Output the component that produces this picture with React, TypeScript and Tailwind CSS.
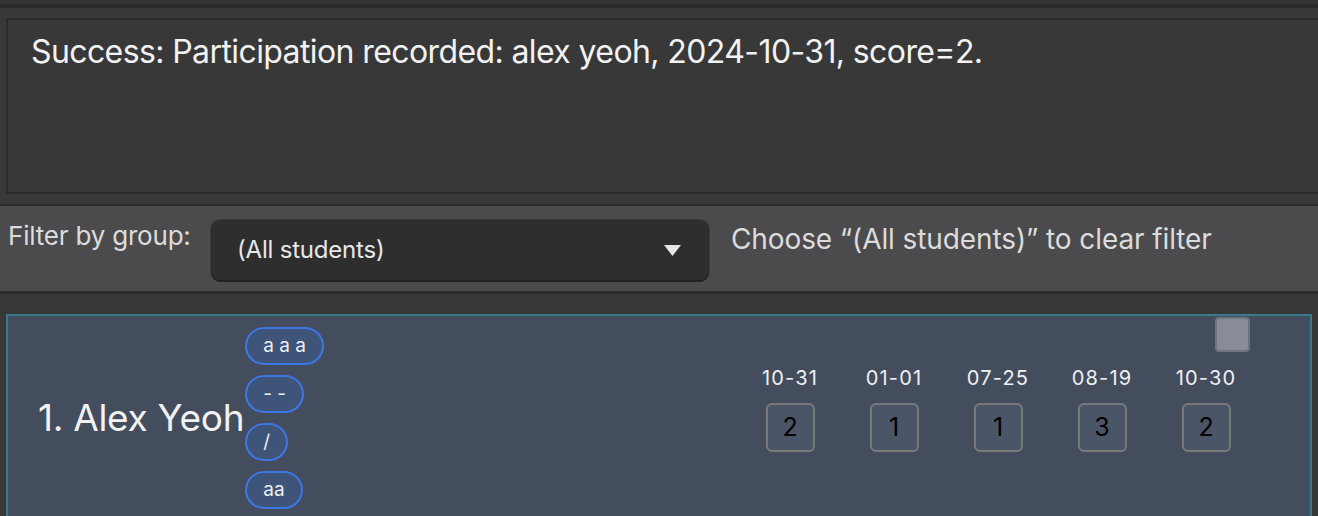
const dates = [
  { d: "10-31", s: 2 },
  { d: "01-01", s: 1 },
  { d: "07-25", s: 1 },
  { d: "08-19", s: 3 },
  { d: "10-30", s: 2 },
];

const tags = ["a a a", "- -", "/", "aa"];

export default function App() {
  return (
    <div className="w-[1318px] h-[516px] overflow-hidden bg-[#383838] font-['Inter',sans-serif]">
      {/* result display */}
      <div className="h-[4px] bg-[#353535]" />
      <div className="h-[4px] bg-[#2b2b2b]" />
      <div className="pt-[10px] pl-[6px] pb-[10px]">
        <div className="h-[176px] border-2 border-r-0 border-[#2b2b2b] bg-[#383838] px-[23px] pt-[12px]">
          <p className="text-[32px] leading-[40px] text-[#f2f2f2] tracking-[-0.6px] whitespace-nowrap">
            Success: Participation recorded: alex yeoh, 2024-10-31, score=2.
          </p>
        </div>
      </div>

      {/* filter bar */}
      <div className="h-[2px] bg-[#2b2b2b]" />
      <div className="h-[85px] bg-[#4b4b4d] flex items-start">
        <span className="pl-[8px] pt-[14px] w-[211px] text-[26px] leading-[32px] text-[#dcdcdc] tracking-[-0.2px] whitespace-nowrap">
          Filter by group:
        </span>
        <div className="mt-[14px] w-[498px] h-[60px] rounded-[9px] bg-[#2e2e2e] shadow-[0_2px_0_#232323,0_0_0_1px_#3a3a3a] flex items-center justify-between pl-[26px] pr-[28px]">
          <span className="text-[24px] leading-[30px] text-[#e8e8e8] tracking-[-0.2px]">(All students)</span>
          <svg width="17" height="11" viewBox="0 0 17 11">
            <polygon points="0,0 17,0 8.5,11" fill="#e6e6e6" />
          </svg>
        </div>
        <span className="pl-[22px] pt-[15px] text-[28px] leading-[36px] text-[#dcdcdc] tracking-[-0.1px] whitespace-nowrap">
          Choose “(All students)” to clear filter
        </span>
      </div>
      <div className="h-[3px] bg-[#2b2b2b]" />

      {/* student list */}
      <div className="pt-[20px] pl-[6px] pr-[6px]">
        <div className="h-[220px] border-2 border-[#3b7a8c] bg-[#434d5e] flex">
          <div className="pl-[30px] pt-[80px] text-[37px] leading-[44px] text-[#f2f2f2] tracking-[-0.3px] whitespace-nowrap">
            1. Alex Yeoh
          </div>
          <div className="ml-[1px] pt-[11px] flex flex-col items-start gap-[10px]">
            {tags.map((t) => (
              <span
                key={t}
                className="h-[38px] min-w-[42px] rounded-full border-2 border-[#3b78e6] bg-[#3e5478] px-[16px] flex items-center justify-center text-[19px] text-[#f0f0f0]"
              >
                {t}
              </span>
            ))}
          </div>
          <div className="flex-1 flex flex-col items-end pr-[60px]">
            <div className="mt-[1px] w-[35px] h-[35px] rounded-[4px] bg-[#888c96] border-2 border-[#6f7480]" />
            <div className="mt-[14px] mr-[20px] flex gap-[56px]">
              {dates.map((x) => (
                <div key={x.d} className="w-[48px] flex flex-col items-center">
                  <span className="text-[20px] leading-[24px] text-[#f0f0f0] tracking-[1.2px] whitespace-nowrap">{x.d}</span>
                  <div className="mt-[13px] w-[49px] h-[49px] rounded-[6px] border-2 border-[#7a7a7a] bg-[#4b5568] flex items-center justify-center text-[25px] text-black">
                    {x.s}
                  </div>
                </div>
              ))}
            </div>
          </div>
        </div>
      </div>
    </div>
  );
}
